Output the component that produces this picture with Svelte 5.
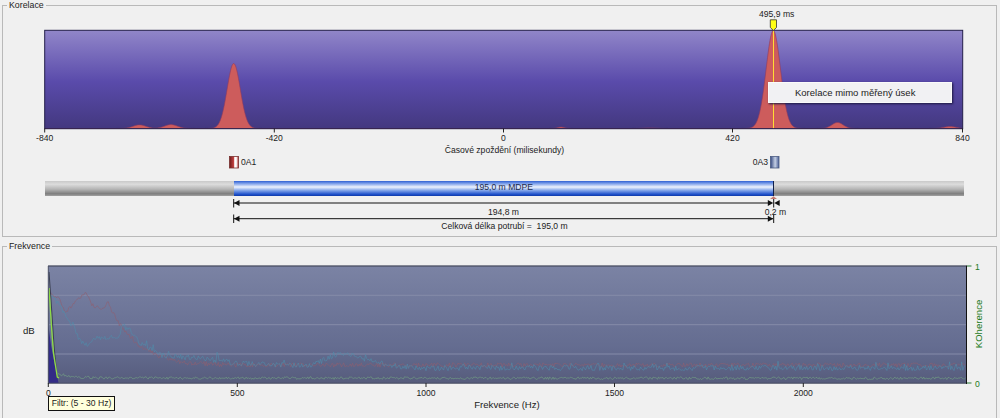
<script lang="ts">
	const corrTicks = [
		{ x: 44.7, label: '-840' },
		{ x: 274.3, label: '-420' },
		{ x: 503.5, label: '0' },
		{ x: 732.5, label: '420' },
		{ x: 962.5, label: '840' }
	];
	const freqTicks = [
		{ x: 48.3, label: '0' },
		{ x: 237.3, label: '500' },
		{ x: 426, label: '1000' },
		{ x: 614.5, label: '1500' },
		{ x: 803.3, label: '2000' }
	];
	const gridLines = [295.3, 324.7, 354];

	// correlation peaks: centre, height above the baseline, width
	const peaks = [
		[233.7, 65, 6.6],
		[773.3, 98, 7.2],
		[139.5, 3.6, 6.5],
		[171, 3.9, 6.5],
		[561, 1.4, 3.5],
		[837.5, 6, 5.6],
		[950, 2, 6],
		[650, 0.5, 6]
	];
	const baseY = 128.5;

	function corrArea(): string {
		const pts: string[] = [`44.7,${baseY}`];
		for (let x = 45; x <= 962.5; x += 0.5) {
			let h = 0;
			for (const [c, a, w] of peaks) h += a * Math.exp(-((x - c) ** 2) / (2 * w * w));
			pts.push(`${x},${(baseY - h).toFixed(2)}`);
		}
		pts.push(`962.5,${baseY}`);
		return pts.join(' ');
	}

	// small seeded generator so the noise is the same on every load
	let seed = 4711;
	function rnd(): number {
		seed = (seed * 16807) % 2147483647;
		return seed / 2147483647 - 0.5;
	}

	function noisy(shape: number[][], amp: number, spikes = 0): string {
		const pts: string[] = [];
		let seg = 0;
		const end = shape[shape.length - 1][0];
		for (let x = shape[0][0]; x <= end; x += 1.1) {
			while (shape[seg + 1][0] < x) seg++;
			const [x0, y0] = shape[seg];
			const [x1, y1] = shape[seg + 1];
			let y = y0 + ((y1 - y0) * (x - x0)) / (x1 - x0) + rnd() * amp;
			if (spikes && Math.abs(rnd()) > 0.5 - spikes) y -= Math.abs(rnd()) * amp * 2;
			pts.push(`${x.toFixed(1)},${Math.min(y, 382).toFixed(1)}`);
		}
		return pts.join(' ');
	}

	const redLine = noisy(
		[
			[50, 292],
			[60, 300],
			[66, 312],
			[72, 305],
			[86, 292],
			[92, 305],
			[100, 309],
			[108, 303],
			[120, 325],
			[140, 346.7],
			[160, 356.7],
			[186.7, 363],
			[233, 365],
			[966, 365]
		],
		4.5
	);
	const tealLine = noisy(
		[
			[52, 295],
			[66, 315],
			[80, 340],
			[84, 345],
			[100, 338],
			[120, 337],
			[122, 325],
			[130, 330],
			[140, 343],
			[160, 355],
			[180, 356.7],
			[216.5, 360],
			[217.5, 344],
			[218.5, 360],
			[233, 363],
			[310, 366],
			[330, 357],
			[345, 353],
			[387, 365],
			[420, 368],
			[966, 368]
		],
		5.5,
		0.03
	);
	const greenLine = noisy(
		[
			[58, 374],
			[75, 377],
			[100, 378],
			[966, 378.3]
		],
		2.6
	);
</script>

<div class="screen">
	<fieldset class="panel korelace">
		<legend>Korelace</legend>
		<div class="plot">
			<svg class="corr" viewBox="3 11 993 169" width="993" height="169">
				<defs>
					<linearGradient id="corrBg" x1="0" y1="0" x2="0" y2="1">
						<stop offset="0" stop-color="#9186c9" />
						<stop offset="0.52" stop-color="#5a4bab" />
						<stop offset="1" stop-color="#43387f" />
					</linearGradient>
					<linearGradient id="redCap" x1="0" y1="0" x2="1" y2="0">
						<stop offset="0" stop-color="#6e1a1a" />
						<stop offset="0.45" stop-color="#c04040" />
						<stop offset="0.58" stop-color="#fff" />
						<stop offset="0.75" stop-color="#fff" />
						<stop offset="1" stop-color="#b03030" />
					</linearGradient>
					<linearGradient id="blueCap" x1="0" y1="0" x2="1" y2="0">
						<stop offset="0" stop-color="#34487f" />
						<stop offset="0.55" stop-color="#c4cfe4" />
						<stop offset="1" stop-color="#4a5f96" />
					</linearGradient>
				</defs>
				<rect class="corr-bg" x="44.7" y="30.3" width="918" height="98.4" />
				<polygon class="corr-area" points={corrArea()} />
				<line class="cursor" x1="773.5" y1="30" x2="773.5" y2="128.5" />
				<rect class="corr-frame" x="44.7" y="30.3" width="918" height="98.4" />
				<polygon class="pin" points="770.3,19.8 776.5,19.8 776.5,27.5 773.4,30.5 770.3,27.5" />
				<text class="txt mid" x="776.7" y="17">495,9 ms</text>

				{#each corrTicks as t (t.label)}
					<line class="tick" x1={t.x} y1="128.5" x2={t.x} y2="132.5" />
					<text class="txt mid" x={t.x} y="141">{t.label}</text>
				{/each}
				<text class="txt mid" x="504.5" y="152.5">Časové zpoždění (milisekundy)</text>

				<rect class="cap-red" x="229.5" y="156.5" width="9" height="11.5" />
				<text class="txt" x="241" y="164.5">0A1</text>
				<rect class="cap-blue" x="770.5" y="156.5" width="8.5" height="11.5" />
				<text class="txt end" x="768" y="164.5">0A3</text>
			</svg>
			<div class="popup">Korelace mimo měřený úsek</div>
		</div>

		<div class="pipe">
			<div class="pipe-end"></div>
			<div class="pipe-run">195,0 m MDPE</div>
			<div class="pipe-end"></div>
		</div>

		<svg class="dims" viewBox="3 196 993 40" width="993" height="40">
			<polygon class="mark" points="770,199 777,199 773.5,196.2" />
			<line class="dim" x1="233.7" y1="203" x2="768" y2="203" />
			<line class="dim" x1="233.7" y1="218.7" x2="773" y2="218.7" />
			<line class="dim" x1="233.7" y1="199" x2="233.7" y2="207.5" />
			<line class="dim" x1="233.7" y1="214.5" x2="233.7" y2="223" />
			<line class="dim" x1="773.7" y1="199" x2="773.7" y2="207.5" />
			<line class="dim" x1="773.7" y1="214.5" x2="773.7" y2="223" />
			<polygon class="arrow" points="234,203 239.5,200 239.5,206" />
			<polygon class="arrow" points="234,218.7 239.5,215.7 239.5,221.7" />
			<polygon class="arrow" points="773.3,218.7 767.8,215.7 767.8,221.7" />
			<polygon class="arrow" points="773.3,203 767.8,200 767.8,206" />
			<polygon class="arrow" points="774.2,203 779.7,200 779.7,206" />
			<text class="txt mid" x="503.5" y="215">194,8 m</text>
			<text class="txt" x="764.7" y="215">0,2 m</text>
			<text class="txt mid" x="504.5" y="228.5">Celková délka potrubí =&#160; 195,0 m</text>
		</svg>
	</fieldset>

	<fieldset class="panel frekvence">
		<legend>Frekvence</legend>
		<div class="plot">
			<svg class="freq" viewBox="3 252 993 166" width="993" height="166">
				<defs>
					<linearGradient id="freqBg" x1="0" y1="0" x2="0" y2="1">
						<stop offset="0" stop-color="#7b83a4" />
						<stop offset="0.7" stop-color="#646c90" />
						<stop offset="1" stop-color="#565c7c" />
					</linearGradient>
				</defs>
				<rect class="freq-bg" x="48.3" y="265.7" width="918" height="117.5" />
				{#each gridLines as y (y)}
					<line class="grid" x1="48.3" y1={y} x2="966" y2={y} />
				{/each}
				<polygon class="low-fill" points="48.3,325 51,345 58.5,383 48.3,383" />
				<polyline class="series red" points={redLine} />
				<polyline class="series teal" points={tealLine} />
				<polyline class="series green" points={greenLine} />
				<polyline class="low-dark" points="49,272 51,300 54,345 57,378" />
				<polyline class="low-green" points="49,288 51.7,330 53.5,353 57.3,377 59,378" />

				<line class="frame-top" x1="48" y1="266" x2="966.3" y2="266" />
				<line class="frame-left" x1="48.3" y1="266" x2="48.3" y2="383.5" />
				<line class="frame-bottom" x1="48" y1="383.2" x2="966.3" y2="383.2" />
				<line class="frame-right" x1="966.5" y1="265.5" x2="966.5" y2="384" />

				{#each freqTicks as t (t.label)}
					<line class="tick" x1={t.x} y1="383" x2={t.x} y2="387" />
					<text class="txt mid" x={t.x} y="395.5">{t.label}</text>
				{/each}
				<text class="axis mid" x="507" y="408">Frekvence (Hz)</text>
				<text class="axis" x="23" y="334">dB</text>

				<line class="tick-green" x1="967" y1="266" x2="971.5" y2="266" />
				<line class="tick-green" x1="967" y1="383" x2="971.5" y2="383" />
				<text class="txt coh" x="975" y="269.5">1</text>
				<text class="txt coh" x="975" y="386.5">0</text>
				<text class="axis coh mid" transform="translate(981.5 324) rotate(-90)">KOherence</text>
			</svg>
			<div class="filter-tag">Filtr: (5 - 30 Hz)</div>
		</div>
	</fieldset>
</div>

<style>
	:global(body) {
		background: #f0f0f0;
		overflow: hidden;
	}

	.screen {
		height: 418px;
		overflow: hidden;
		padding-left: 2px;
		font-family: 'Liberation Sans', Arial, sans-serif;
		color: #111;
	}

	.panel {
		width: 995px;
		margin: 0;
		padding: 0;
		border: 1px solid #b9b9b9;
		box-sizing: border-box;
		min-width: 0;
	}

	.panel legend {
		margin-left: 4px;
		padding: 0 2px;
		font-size: 8.8px;
		line-height: 11px;
		color: #222;
	}

	.korelace {
		height: 237px;
	}

	.frekvence {
		margin-top: 4px;
		height: 200px;
	}

	.plot {
		position: relative;
	}

	svg {
		display: block;
		overflow: visible;
	}

	.txt {
		font-size: 8.6px;
		fill: #222;
	}

	.axis {
		font-size: 9.6px;
		fill: #222;
	}

	.mid {
		text-anchor: middle;
	}

	.end {
		text-anchor: end;
	}

	.corr-bg {
		fill: url(#corrBg);
	}

	.corr-area {
		fill: #cd5c5c;
		stroke: #8e3a5e;
		stroke-width: 0.6;
	}

	.corr-frame {
		fill: none;
		stroke: #241f4a;
		stroke-width: 1;
	}

	.cursor {
		stroke: #ffdd33;
		stroke-width: 1;
	}

	.pin {
		fill: #ffff14;
		stroke: #333;
		stroke-width: 0.8;
	}

	.tick {
		stroke: #222;
		stroke-width: 1;
	}

	.cap-red {
		fill: url(#redCap);
		stroke: #77302f;
		stroke-width: 0.8;
	}

	.cap-blue {
		fill: url(#blueCap);
		stroke: #4a5a80;
		stroke-width: 0.8;
	}

	.popup {
		position: absolute;
		left: 765px;
		top: 71px;
		width: 184px;
		height: 21px;
		box-sizing: border-box;
		padding-left: 26px;
		background: #f1f1f3;
		border: 1px solid #fafafa;
		box-shadow: 1px 1px 2px #1c1840;
		font-size: 9.5px;
		line-height: 19px;
		color: #222;
	}

	.pipe {
		display: flex;
		height: 15px;
		margin: 1px 0 0 41.7px;
		width: 919.3px;
	}

	.pipe-end {
		flex: 1;
		background: linear-gradient(#c9c9c9 0%, #dcdcdc 22%, #b4b4b4 55%, #7e7e7e 85%, #a2a2a2 100%);
	}

	.pipe-run {
		flex: 0 0 540px;
		box-sizing: border-box;
		border-right: 1px solid #10204a;
		background: linear-gradient(#2f5fd2 0%, #6f95e6 14%, #eef3fd 40%, #86a8ea 62%, #1f52cc 88%, #0f3aa8 100%);
		text-align: center;
		font-size: 8.6px;
		line-height: 13px;
		color: #1c2a4c;
	}

	.dim {
		stroke: #111;
		stroke-width: 1;
	}

	.arrow {
		fill: #111;
	}

	.mark {
		fill: #c47a72;
	}

	.freq-bg {
		fill: url(#freqBg);
	}

	.grid {
		stroke: #858ca9;
		stroke-width: 1;
	}

	.low-fill {
		fill: #332c86;
	}

	.series {
		fill: none;
		stroke-width: 0.7;
		stroke-opacity: 0.85;
	}

	.red {
		stroke: #8f5f70;
	}

	.teal {
		stroke: #4f8cab;
	}

	.green {
		stroke: #74a683;
	}

	.low-dark {
		fill: none;
		stroke: #3b4152;
		stroke-width: 1;
	}

	.low-green {
		fill: none;
		stroke: #8fdc46;
		stroke-width: 1.3;
	}

	.frame-top {
		stroke: #3b3f4f;
		stroke-width: 1.2;
	}

	.frame-left {
		stroke: #4a4f66;
		stroke-width: 1;
	}

	.frame-bottom {
		stroke: #454a60;
		stroke-width: 1;
	}

	.frame-right {
		stroke: #111;
		stroke-width: 1;
	}

	.tick-green {
		stroke: #2a7a3a;
		stroke-width: 1;
	}

	.coh {
		fill: #1c7a22;
	}

	.filter-tag {
		position: absolute;
		left: 45px;
		top: 144px;
		width: 67px;
		height: 15px;
		box-sizing: border-box;
		background: #ffffdc;
		border: 1px solid #111;
		text-align: center;
		font-size: 8.6px;
		line-height: 13px;
		color: #222;
	}
</style>
